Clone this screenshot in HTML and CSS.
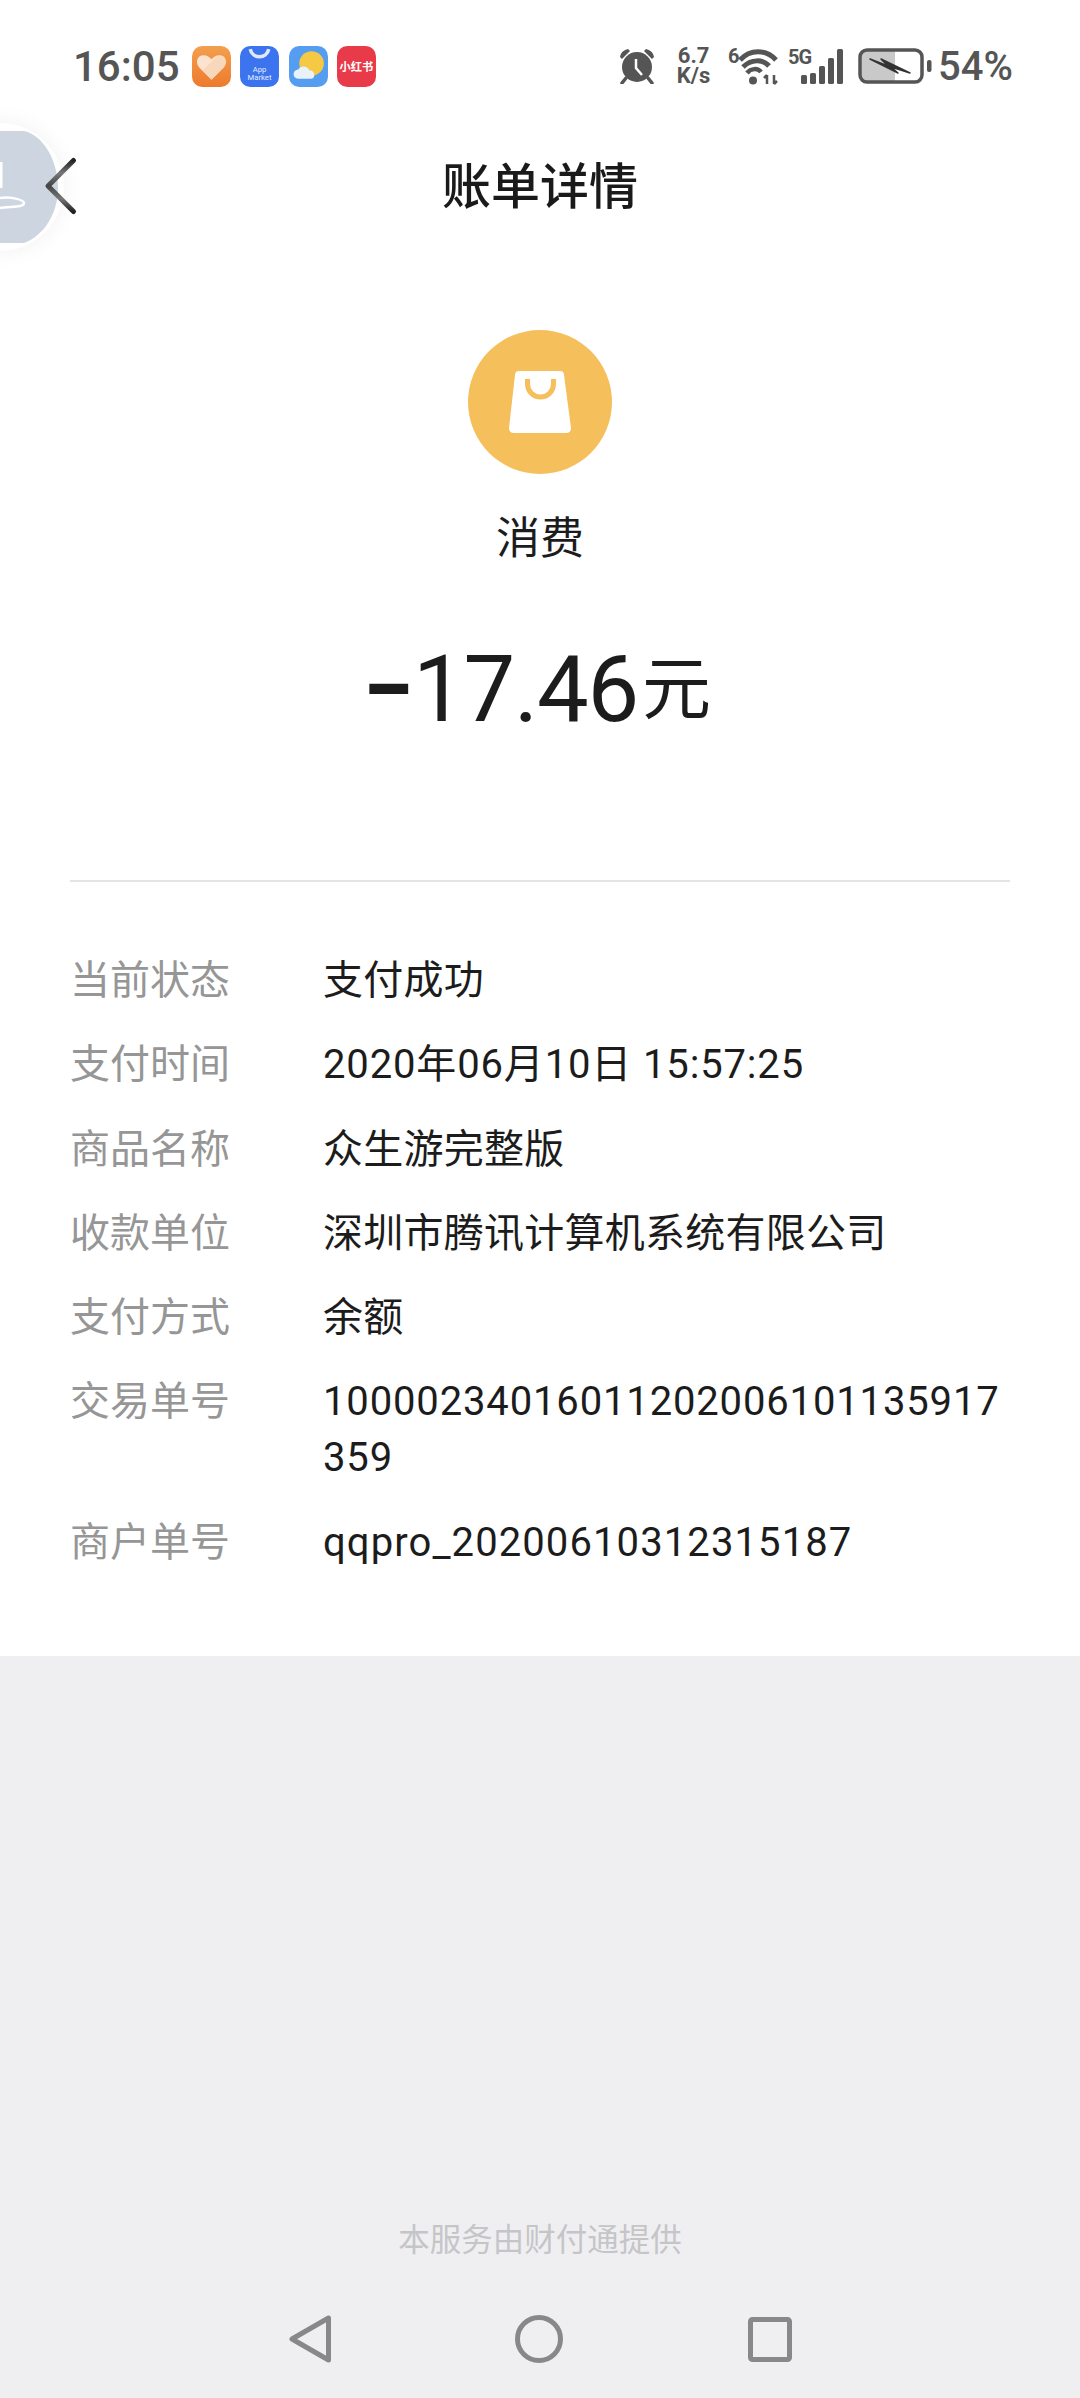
FILE: index.html
```html
<!DOCTYPE html>
<html lang="zh-CN">
<head>
    <meta charset="UTF-8">
    <meta name="viewport" content="width=device-width, initial-scale=1.0">
    <title>账单详情</title>
    <link rel="stylesheet" href="styles.css">
</head>
<body>
    <div id="page">
        <div id="bill">
            <div class="status-bar">
                <span class="clock">16:05</span>
                <div class="app-icons">
                    <svg class="app-icon" viewBox="0 0 38 40">
                        <defs>
                            <linearGradient id="healthBg" x1="0" y1="0" x2="0" y2="1">
                                <stop offset="0" stop-color="#f2a04e"/>
                                <stop offset="1" stop-color="#ee7a2c"/>
                            </linearGradient>
                        </defs>
                        <rect width="38" height="40" rx="10" fill="url(#healthBg)"/>
                        <path d="M19 33 L7 21 C3 16 5 9 11 9 C15 9 17 11 19 13 C21 11 23 9 27 9 C33 9 35 16 31 21 Z" fill="#fbe3cf"/>
                        <path d="M19 33 L10 24 L25 10 C33 9 35 16 31 21 Z" fill="#f8d2b0" opacity="0.7"/>
                    </svg>
                    <svg class="app-icon" viewBox="0 0 38 40">
                        <rect width="38" height="40" rx="10" fill="#3b74ee"/>
                        <path d="M10 3 C12 13 26 13 28 3" fill="none" stroke="#dfe9ff" stroke-width="3.5"/>
                        <text x="19" y="25" class="app-market">App</text>
                        <text x="19" y="33" class="app-market">Market</text>
                    </svg>
                    <svg class="app-icon" viewBox="0 0 38 40">
                        <rect width="38" height="40" rx="10" fill="#559df0"/>
                        <circle cx="22" cy="17" r="12" fill="#f6c945"/>
                        <path d="M9 32 C3 32 3 23 9 23 C11 19 18 19 20 24 C25 23 27 32 21 32 Z" fill="#e9f1fa"/>
                    </svg>
                    <svg class="app-icon" viewBox="0 0 38 40">
                        <rect width="38" height="40" rx="10" fill="#e83a48"/>
                        <text x="19" y="24" class="app-red">小红书</text>
                    </svg>
                </div>
                <div class="status-right">
                    <svg class="ic-alarm" viewBox="0 0 36 36">
                        <circle cx="18" cy="19" r="15" fill="#555"/>
                        <path d="M1 9 C2 4 5 2 9 1 L11 3 L3 11 Z M35 9 C34 4 31 2 27 1 L25 3 L33 11 Z" fill="#555"/>
                        <path d="M7 30 L3 35 M29 30 L33 35" stroke="#555" stroke-width="3.5" stroke-linecap="round"/>
                        <path d="M17 11 V20 L23 27" fill="none" stroke="#fff" stroke-width="2.5"/>
                    </svg>
                    <div class="net-speed">
                        <span>6.7</span>
                        <span>K/s</span>
                    </div>
                    <svg class="ic-wifi" viewBox="0 -6 50 48">
                        <text x="0" y="15" class="wifi-six">6</text>
                        <path d="M12 12 C22 1 38 1 48 12" fill="none" stroke="#555" stroke-width="5"/>
                        <path d="M15 19 C23 11 35 11 41 18" fill="none" stroke="#555" stroke-width="5"/>
                        <path d="M19 25 C23 20 30 20 33 24" fill="none" stroke="#555" stroke-width="4.5"/>
                        <circle cx="25" cy="32.5" r="4" fill="#555"/>
                        <path d="M39 27 V36 M36 30 L39 27 M46 27 V36 M49 33 L46 36" fill="none" stroke="#555" stroke-width="2.5"/>
                    </svg>
                    <svg class="ic-signal" viewBox="0 -6 56 48">
                        <text x="0" y="16" class="sig-5g">5G</text>
                        <rect x="13" y="27" width="6" height="9" rx="1.5" fill="#555"/>
                        <rect x="22" y="25" width="6" height="11" rx="1.5" fill="#555"/>
                        <rect x="31" y="18" width="6" height="18" rx="1.5" fill="#555"/>
                        <rect x="40" y="10" width="6" height="26" rx="1.5" fill="#555"/>
                        <rect x="49" y="1" width="6" height="35" rx="1.5" fill="#555"/>
                    </svg>
                    <svg class="ic-battery" viewBox="0 0 74 36">
                        <path d="M6 3 H37 V33 H6 A4 4 0 0 1 2 29 V7 A4 4 0 0 1 6 3 Z" fill="#c9c9c9"/>
                        <rect x="2" y="2" width="62" height="32" rx="7" fill="none" stroke="#555" stroke-width="3.5"/>
                        <rect x="69" y="12" width="4.5" height="12" rx="2" fill="#555"/>
                        <path d="M12 11 L30 18 L23 11 L52 25 L33 19 L40 25 Z" fill="#333" stroke="#333" stroke-width="1.5" stroke-linejoin="round"/>
                    </svg>
                    <span class="battery-text">54%</span>
                </div>
            </div>

            <div class="nav-bar">
                <h1 class="nav-title">账单详情</h1>
            </div>

            <div class="summary">
                <svg class="type-icon" viewBox="0 0 144 144">
                    <circle cx="72" cy="72" r="72" fill="#f5bf5c"/>
                    <path d="M51 41 H92 Q96 41 96 45 L103 98 Q103 103 98 103 H46 Q41 103 41 98 L47 45 Q47 41 51 41 Z" fill="#fff"/>
                    <path d="M59.5 49 V54 A13 13 0 0 0 85.5 54 V49" fill="none" stroke="#f5bf5c" stroke-width="5"/>
                </svg>
                <div class="type-name">消费</div>
                <div class="amount"><span class="amount-sign">−</span>17.46<span class="amount-unit">元</span></div>
            </div>

            <div class="divider"></div>

            <div class="rows">
                <div class="row"><span class="row-label">当前状态</span><span class="row-value">支付成功</span></div>
                <div class="row"><span class="row-label">支付时间</span><span class="row-value row-date">2020年06月10日 15:57:25</span></div>
                <div class="row"><span class="row-label">商品名称</span><span class="row-value">众生游完整版</span></div>
                <div class="row"><span class="row-label">收款单位</span><span class="row-value">深圳市腾讯计算机系统有限公司</span></div>
                <div class="row"><span class="row-label">支付方式</span><span class="row-value">余额</span></div>
                <div class="row"><span class="row-label">交易单号</span><span class="row-value row-date">10000234016011202006101135917359</span></div>
                <div class="row"><span class="row-label">商户单号</span><span class="row-value row-order">qqpro_20200610312315187</span></div>
            </div>
        </div>

        <div id="bottom">
            <div class="provider">本服务由财付通提供</div>
            <div class="sys-nav">
                <svg class="sys-back" viewBox="0 0 42 48">
                    <path d="M39.5 3 V45 L3 24 Z" fill="none" stroke="#888" stroke-width="5" stroke-linejoin="round"/>
                </svg>
                <svg class="sys-home" viewBox="0 0 48 48">
                    <circle cx="24" cy="24" r="21.5" fill="none" stroke="#888" stroke-width="5"/>
                </svg>
                <svg class="sys-recent" viewBox="0 0 44 45">
                    <rect x="2.5" y="2.5" width="39" height="40" rx="2" fill="none" stroke="#888" stroke-width="5"/>
                </svg>
            </div>
        </div>

        <!-- floating bubble + back arrow, sits over the nav bar -->
        <svg class="bubble" viewBox="0 0 110 200">
            <defs>
                <linearGradient id="backStroke" x1="0" y1="0" x2="0" y2="1">
                    <stop offset="0" stop-color="#222"/>
                    <stop offset="0.25" stop-color="#777"/>
                    <stop offset="0.5" stop-color="#444"/>
                    <stop offset="0.75" stop-color="#777"/>
                    <stop offset="1" stop-color="#222"/>
                </linearGradient>
                <radialGradient id="bubbleShadow" gradientUnits="userSpaceOnUse" cx="0" cy="87" r="86">
                    <stop offset="0.72" stop-color="#f7f7f7"/>
                    <stop offset="1" stop-color="#ffffff" stop-opacity="0"/>
                </radialGradient>
            </defs>
            <circle cx="0" cy="87" r="86" fill="url(#bubbleShadow)"/>
            <circle cx="0" cy="87" r="64" fill="#fff"/>
            <path d="M0 31 H24 C34 33 44 42 50 54 C55 64 58 76 58 88 C58 102 54 114 46 126 C40 134 32 140 24 143 H0 Z" fill="#cdd5e0"/>
            <path d="M1 62 V88" fill="none" stroke="#fff" stroke-width="3"/>
            <path d="M0 98 C10 96 24 100 24 103 C24 108 8 106 0 108" fill="none" stroke="#fff" stroke-width="2.5"/>
            <path d="M73.5 60.5 L48 86 L73.5 111.5" fill="none" stroke="url(#backStroke)" stroke-width="5" stroke-linecap="round" stroke-linejoin="round"/>
        </svg>
    </div>
</body>
</html>
```

FILE: styles.css
```css
* {
    box-sizing: border-box;
}

body {
    margin: 0;
    background-color: #ffffff;
    font-family: Roboto, "Noto Sans CJK SC", sans-serif;
    color: #1c1c1c;
}

#page {
    position: relative;
    display: flex;
    flex-direction: column;
    width: 1080px;
    height: 2398px;
    overflow: hidden;
}

#bill {
    background-color: #ffffff;
    padding-bottom: 85px;
}

.status-bar {
    display: flex;
    align-items: center;
    height: 132px;
    padding: 0 67px 0 73px;
    color: #555555;
}

.clock {
    font-size: 42px;
    font-weight: 500;
}

.app-icons {
    display: flex;
    align-items: center;
    gap: 9.5px;
    margin-left: 12px;
}

.app-icon {
    width: 39px;
    height: 41px;
}

.app-market {
    font-family: Roboto, sans-serif;
    font-size: 7.5px;
    fill: #e6eeff;
    text-anchor: middle;
}

.app-red {
    font-family: "Noto Sans CJK SC", sans-serif;
    font-size: 11px;
    font-weight: 700;
    fill: #ffffff;
    text-anchor: middle;
}

.status-right {
    display: flex;
    align-items: center;
    margin-left: auto;
}

.ic-alarm {
    width: 36px;
    height: 36px;
}

.net-speed {
    display: flex;
    flex-direction: column;
    align-items: center;
    width: 37px;
    margin-left: 20px;
    font-size: 22px;
    font-weight: 700;
    line-height: 20px;
}

.ic-wifi {
    width: 50px;
    height: 48px;
    margin-left: 16px;
}

.wifi-six,
.sig-5g {
    font-family: Roboto, sans-serif;
    font-weight: 700;
    fill: #555555;
}

.wifi-six {
    font-size: 20px;
}

.sig-5g {
    font-size: 20px;
    letter-spacing: -1px;
}

.ic-signal {
    width: 56px;
    height: 48px;
    margin-left: 10px;
}

.ic-battery {
    width: 74px;
    height: 36px;
    margin-left: 14px;
}

.battery-text {
    margin-left: 6px;
    font-size: 40px;
    font-weight: 500;
}

.nav-bar {
    display: flex;
    align-items: center;
    justify-content: center;
    height: 112px;
}

.nav-title {
    margin: 0;
    font-size: 49px;
    font-weight: 500;
    line-height: 60px;
    color: #1a1a1a;
}

.summary {
    display: flex;
    flex-direction: column;
    align-items: center;
    padding: 86px 0 140px;
}

.type-icon {
    width: 144px;
    height: 144px;
}

.type-name {
    margin-top: 35px;
    font-size: 44px;
    line-height: 60px;
}

.amount {
    margin-top: 71px;
    margin-right: 6px;
    font-size: 92px;
    line-height: 100px;
    letter-spacing: -1.2px;
}

.amount-sign {
    font-weight: 700;
}

.amount-unit {
    margin-left: 4px;
    font-size: 69px;
    line-height: 1;
    letter-spacing: 0;
    vertical-align: 7px;
}

.divider {
    height: 2px;
    margin: 0 70px;
    background-color: #e4e4e4;
}

.rows {
    display: flex;
    flex-direction: column;
    gap: 28.3px;
    padding: 71px 68px 0 70px;
    font-size: 40px;
    line-height: 56px;
}

.row {
    display: flex;
}

.row-label {
    flex: 0 0 253px;
    color: #969696;
}

.row-value {
    flex: 1;
    word-break: break-all;
    color: #1c1c1c;
    letter-spacing: 0.25px;
}

.row-date {
    letter-spacing: 0.85px;
}

.row-order {
    letter-spacing: 1.1px;
}

#bottom {
    display: flex;
    flex-direction: column;
    align-items: center;
    justify-content: flex-end;
    flex: 1;
    background-color: #efeff2;
    padding-bottom: 35px;
}

.provider {
    font-size: 31.5px;
    line-height: 44px;
    color: #c5c5c8;
}

.sys-nav {
    display: flex;
    align-items: center;
    justify-content: space-between;
    width: 503px;
    margin-top: 52px;
}

.sys-back {
    width: 42px;
    height: 48px;
}

.sys-home {
    width: 48px;
    height: 48px;
}

.sys-recent {
    width: 44px;
    height: 45px;
}

.bubble {
    position: absolute;
    left: 0;
    top: 100px;
    width: 110px;
    height: 200px;
}
```
